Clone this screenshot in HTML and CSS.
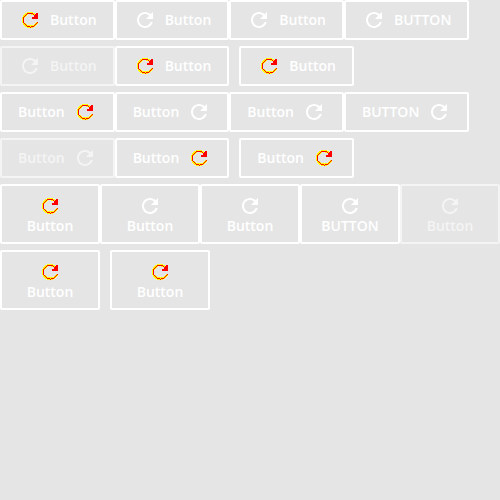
FILE: index.html
```
<!DOCTYPE html>
<html lang="en">
<head>
<meta charset="utf-8">
<title>Buttons</title>
<link rel="stylesheet" href="styles.css">
</head>
<body>
<svg width="0" height="0" class="defs">
  <symbol id="refresh" viewBox="0 0 24 24"><path d="M17.65 6.35C16.2 4.9 14.21 4 12 4c-4.42 0-7.99 3.58-7.99 8s3.57 8 7.99 8c3.73 0 6.84-2.55 7.73-6h-2.08c-.82 2.33-3.04 4-5.65 4-3.31 0-6-2.69-6-6s2.69-6 6-6c1.66 0 3.14.69 4.22 1.78L13 11h7V4l-2.35 2.35z"/></symbol>
</svg>
<div class="row">
  <button class="btn"><i class="icon pixel"></i><span>Button</span></button>
  <button class="btn"><svg class="icon"><use href="#refresh"/></svg><span>Button</span></button>
  <button class="btn"><svg class="icon"><use href="#refresh"/></svg><span>Button</span></button>
  <button class="btn"><svg class="icon"><use href="#refresh"/></svg><span>BUTTON</span></button>
</div>
<div class="row">
  <button class="btn" disabled><svg class="icon"><use href="#refresh"/></svg><span>Button</span></button>
  <button class="btn"><i class="icon pixel"></i><span>Button</span></button>
  <button class="btn spaced"><i class="icon pixel"></i><span>Button</span></button>
</div>
<div class="row">
  <button class="btn"><span>Button</span><i class="icon pixel"></i></button>
  <button class="btn"><span>Button</span><svg class="icon"><use href="#refresh"/></svg></button>
  <button class="btn"><span>Button</span><svg class="icon"><use href="#refresh"/></svg></button>
  <button class="btn"><span>BUTTON</span><svg class="icon"><use href="#refresh"/></svg></button>
</div>
<div class="row">
  <button class="btn" disabled><span>Button</span><svg class="icon"><use href="#refresh"/></svg></button>
  <button class="btn"><span>Button</span><i class="icon pixel"></i></button>
  <button class="btn spaced"><span>Button</span><i class="icon pixel"></i></button>
</div>
<div class="row">
  <button class="btn top"><i class="icon pixel"></i><span>Button</span></button>
  <button class="btn top"><svg class="icon"><use href="#refresh"/></svg><span>Button</span></button>
  <button class="btn top"><svg class="icon"><use href="#refresh"/></svg><span>Button</span></button>
  <button class="btn top"><svg class="icon"><use href="#refresh"/></svg><span>BUTTON</span></button>
  <button class="btn top" disabled><svg class="icon"><use href="#refresh"/></svg><span>Button</span></button>
</div>
<div class="row">
  <button class="btn top"><i class="icon pixel"></i><span>Button</span></button>
  <button class="btn top spaced"><i class="icon pixel"></i><span>Button</span></button>
</div>
</body>
</html>
```
FILE: styles.css
```
body {
  margin: 0;
  background: #e5e5e5;
  font-family: "Open Sans", sans-serif;
}
.defs { display: block; }
.row { display: flex; margin-bottom: 6px; }
.btn {
  box-sizing: border-box;
  display: flex;
  flex: none;
  align-items: center;
  gap: 8px;
  height: 40px;
  margin: 0;
  padding: 0 16px;
  border: 2px solid #fff;
  border-radius: 2px;
  background: transparent;
  color: #fff;
  font: 600 14px/16px "Open Sans", sans-serif;
}
.btn:disabled { opacity: .6; }
.spaced { margin-left: 10px; }
.icon { display: block; flex: none; width: 24px; height: 24px; fill: #fff; }
/* Two-colour pixel version of the refresh icon. */
.pixel {
  background: 0 0 / 24px 24px no-repeat url("data:image/svg+xml,%3Csvg xmlns='http://www.w3.org/2000/svg' width='24' height='24' viewBox='-4 -4 24 24' shape-rendering='crispEdges'%3E%3Cpath fill='%23ff0' d='M5 0h6v1h-6zM3 1h10v1h-10zM2 2h4v1h-4zM9 2h4v1h-4zM1 3h4v1h-4zM1 4h3v1h-3zM0 5h2v6h-2zM2 5h1v1h-1zM1 11h3v1h-3zM1 12h4v1h-4zM2 13h10v1h-10zM3 14h10v1h-10zM5 15h6v1h-6zM10 13h4v1h-4zM12 12h3v1h-3zM13 11h3v1h-3zM14 10h2v1h-2z'/%3E%3Cpath fill='red' d='M5 1h6v1h-6zM4 2h1v1h-1zM11 2h1v1h-1zM3 3h1v1h-1zM2 4h1v1h-1zM1 5h1v6h-1zM2 11h1v1h-1zM3 12h1v1h-1zM4 13h1v1h-1zM5 14h3v1h-3zM9 14h3v1h-3zM8 15h1v1h-1zM12 13h1v1h-1zM13 12h1v1h-1zM14 11h1v1h-1zM15 10h1v1h-1zM14 1h2v6h-6v-1h-.01v-1h2v-2h1v-1h1z'/%3E%3C/svg%3E");
}
.top {
  flex-direction: column;
  justify-content: center;
  gap: 0;
  width: 100px;
  height: 60px;
}
```
